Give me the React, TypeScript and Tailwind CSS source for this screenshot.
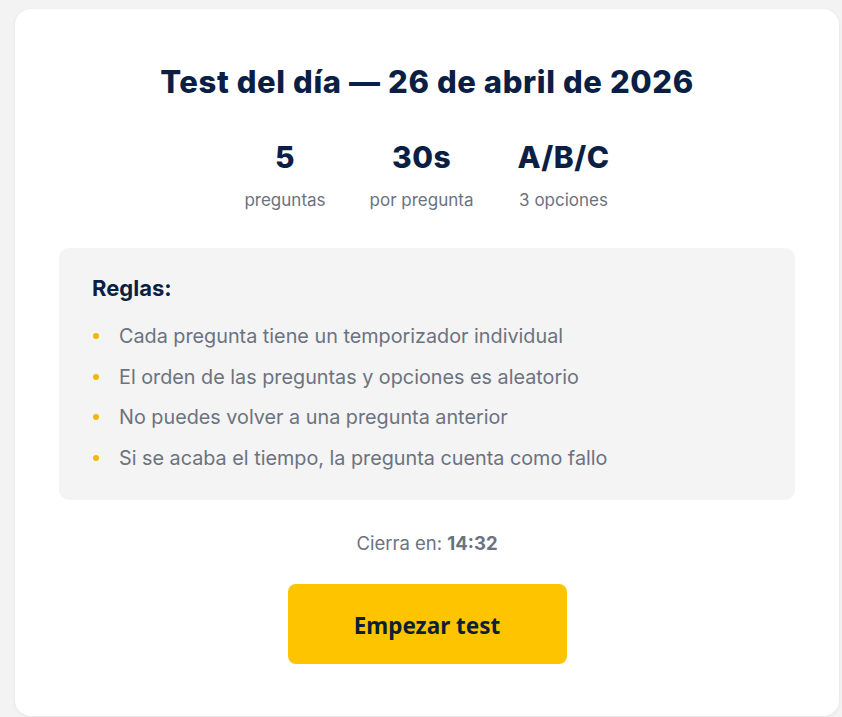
import React from "react";

const stats = [
  { value: "5", label: "preguntas" },
  { value: "30s", label: "por pregunta" },
  { value: "A/B/C", label: "3 opciones" },
];

const rules = [
  "Cada pregunta tiene un temporizador individual",
  "El orden de las preguntas y opciones es aleatorio",
  "No puedes volver a una pregunta anterior",
  "Si se acaba el tiempo, la pregunta cuenta como fallo",
];

export default function App() {
  return (
    <div className="min-h-[717px] bg-[#f3f3f3] pt-[9px] pl-[15px] pr-[3px] font-['Inter',sans-serif]">
      <div className="rounded-2xl bg-white shadow-[0_1px_4px_rgba(0,0,0,0.06)] px-[44px] pt-[55px] pb-[52px] flex flex-col items-center">
        <h1 className="text-[31px] leading-[36px] font-extrabold text-[#0b1f45] tracking-[0.6px]">
          Test del día — 26 de abril de 2026
        </h1>

        <div className="mt-[40px] flex gap-11">
          {stats.map((s) => (
            <div key={s.label} className="flex flex-col items-center">
              <span className="text-[30px] leading-[34px] font-extrabold text-[#0b1f45] tracking-[0.5px]">{s.value}</span>
              <span className="mt-[14px] text-[17px] leading-[24px] text-[#6b7280]">{s.label}</span>
            </div>
          ))}
        </div>

        <div className="mt-[36px] w-full rounded-[10px] bg-[#f4f4f4] pl-[33px] pr-8 pt-[26px] pb-[28px]">
          <h2 className="text-[22px] leading-[28px] font-bold text-[#0b1f45]">Reglas:</h2>
          <ul className="mt-[20px] flex flex-col gap-[12.6px]">
            {rules.map((r) => (
              <li key={r} className="flex items-center text-[19.8px] leading-[28px] text-[#6b7280]">
                <span className="ml-[1px] mr-[20px] h-[6px] w-[6px] shrink-0 rounded-full bg-[#f5b800]" />
                {r}
              </li>
            ))}
          </ul>
        </div>

        <p className="mt-[31px] text-[18.5px] leading-[24px] text-[#6b7280]">
          Cierra en: <span className="font-bold">14:32</span>
        </p>

        <button className="mt-[29px] h-[80px] w-[279px] rounded-lg bg-[#ffc400] pt-1 text-[22.5px] font-bold text-[#0b1f35] font-['Noto_Sans',sans-serif]">
          Empezar test
        </button>
      </div>
    </div>
  );
}
